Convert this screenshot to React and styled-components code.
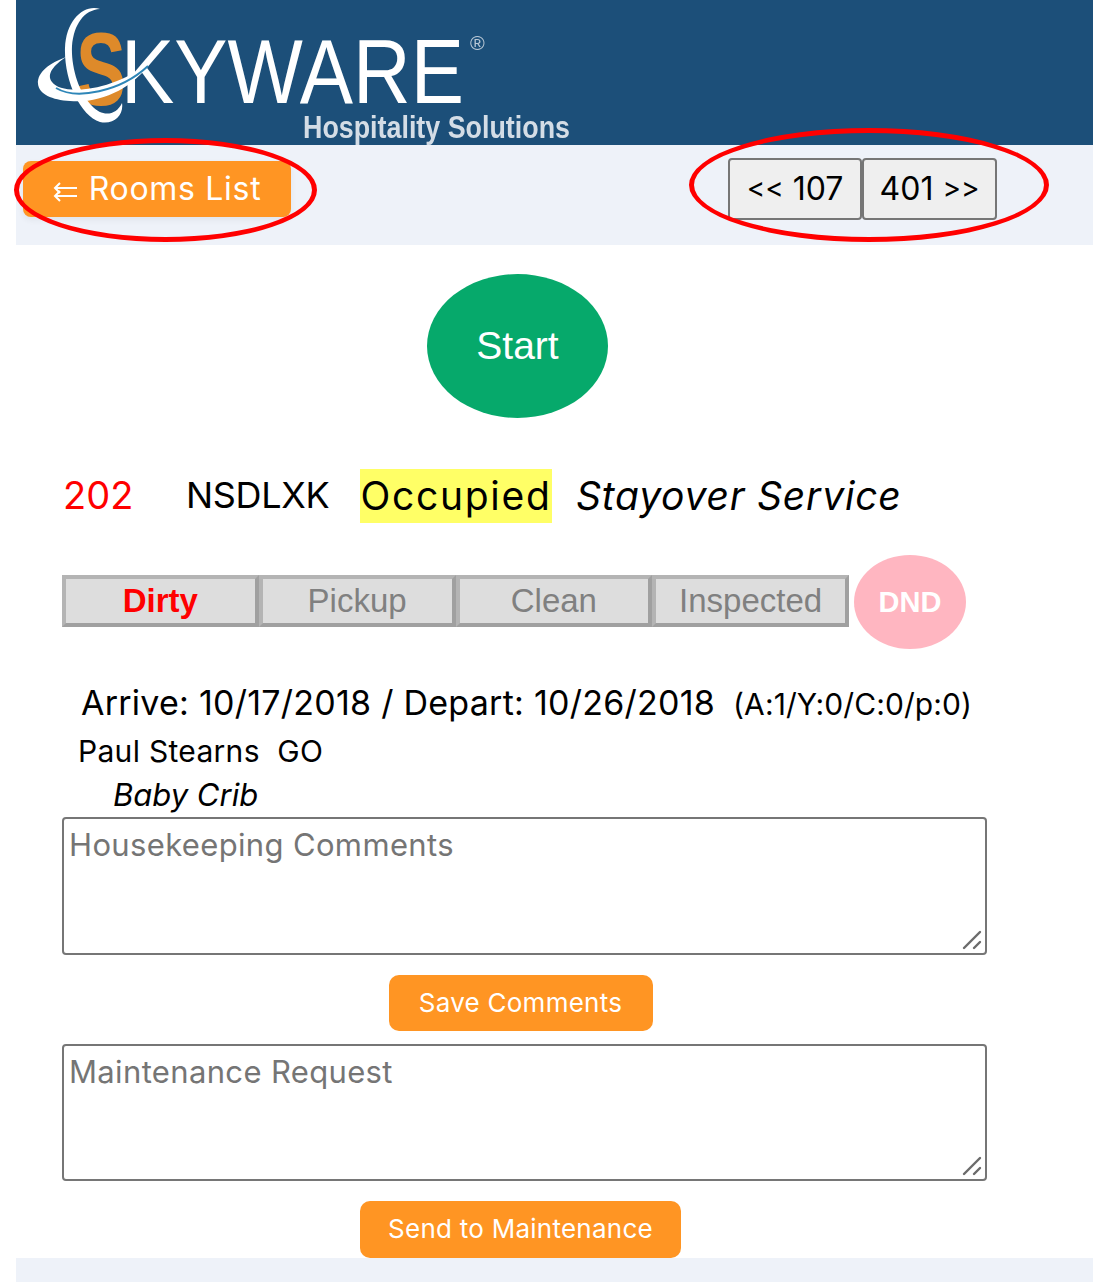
import React from "react";
import styled, { createGlobalStyle } from "styled-components";

const GlobalStyle = createGlobalStyle`
  html, body {
    margin: 0;
    padding: 0;
    background: #fff;
  }
  body {
    font-family: Inter, "Open Sans", sans-serif;
    color: #000;
  }
`;

const Page = styled.div`
  position: relative;
  width: 1093px;
  height: 1282px;
  overflow: hidden;
  padding-left: 16px;
  box-sizing: border-box;
`;

const Banner = styled.header`
  height: 145px;
  background: #1c4f79;
`;

const SubBar = styled.div`
  height: 100px;
  background: #eef2f9;
  display: flex;
  align-items: flex-start;
  padding-left: 7px;
`;

const BackButton = styled.button`
  width: 268px;
  height: 56px;
  margin-top: 16px;
  border: 0;
  border-radius: 8px;
  background: #ff9523;
  color: #fff;
  font-family: inherit;
  font-size: 32px;
  letter-spacing: 0.7px;
  padding: 0 0 2px;
  cursor: pointer;
  box-shadow: 0 3px 6px rgba(0, 0, 0, 0.06);
`;

const NavGroup = styled.div`
  display: flex;
  margin: 13px 0 0 437px;
`;

const NavButton = styled.button`
  width: ${(p) => p.$w}px;
  height: 62px;
  box-sizing: border-box;
  border: 2px solid #767676;
  border-radius: 4px;
  background: #efefef;
  color: #000;
  font-family: inherit;
  font-size: 32px;
  padding: 0 0 2px;
`;

const Chevrons = styled.span`
  font-size: 28px;
  vertical-align: 2px;
`;

const Main = styled.main`
  padding-left: 46px;
`;

const StartRow = styled.div`
  display: flex;
  padding: 29px 0 0 365px;
`;

const StartButton = styled.button`
  width: 181px;
  height: 144px;
  border: 0;
  border-radius: 50%;
  background: #06a96b;
  color: #fff;
  font-family: "Liberation Sans", Arial, sans-serif;
  font-size: 39px;
  padding: 0;
`;

const RoomLine = styled.div`
  display: flex;
  align-items: center;
  height: 54px;
  margin: 51px 0 0 1px;
  white-space: nowrap;
`;

const RoomNo = styled.span`
  color: #ff0000;
  width: 123px;
  font-size: 38px;
  padding-bottom: 2px;
`;

const RoomType = styled.span`
  width: 174px;
  font-size: 36px;
  letter-spacing: -0.3px;
  padding-bottom: 2px;
`;

const Occupied = styled.span`
  background: #ffff66;
  width: 192px;
  height: 54px;
  line-height: 53px;
  text-align: center;
  margin-right: 24px;
  font-size: 39px;
  letter-spacing: 1.7px;
`;

const Service = styled.em`
  font-style: italic;
  font-size: 39px;
  letter-spacing: 0.8px;
  padding-bottom: 2px;
`;

const StatusRow = styled.div`
  display: flex;
  align-items: center;
  margin-top: 32px;
  height: 94px;
`;

const StatusTab = styled.div`
  width: 196.75px;
  height: 52px;
  margin-bottom: 2px;
  box-sizing: border-box;
  border: 4px solid;
  border-color: #b4b4b4 #a0a0a0 #a0a0a0 #b4b4b4;
  background: #dddddd;
  display: flex;
  align-items: center;
  justify-content: center;
  font-family: "Liberation Sans", Arial, sans-serif;
  font-size: 33px;
  font-weight: ${(p) => (p.$active ? 700 : 400)};
  color: ${(p) => (p.$active ? "#ff0000" : "#808080")};
`;

const DndBadge = styled.div`
  width: 112px;
  height: 94px;
  margin-left: 5px;
  border-radius: 50%;
  background: #ffb6c1;
  color: #fff;
  display: flex;
  align-items: center;
  justify-content: center;
  font-family: "Liberation Sans", Arial, sans-serif;
  font-weight: 700;
  font-size: 29px;
`;

const StayLine = styled.div`
  display: flex;
  align-items: baseline;
  margin: 30px 0 0 19px;
  height: 48px;
  line-height: 48px;
  font-size: 34px;
  letter-spacing: 0.25px;
  white-space: nowrap;
`;

const Guests = styled.span`
  font-size: 30px;
  letter-spacing: 0.1px;
  margin-left: 18px;
`;

const GuestLine = styled.div`
  margin: 2px 0 0 16px;
  height: 44px;
  line-height: 44px;
  font-size: 30px;
  letter-spacing: 0.3px;
  white-space: pre;
`;

const NoteLine = styled.div`
  margin: 0 0 0 51px;
  height: 44px;
  line-height: 44px;
  font-size: 31px;
  font-style: italic;
`;

const AreaWrap = styled.div`
  position: relative;
  width: 925px;
  height: ${(p) => p.$h}px;
  margin-top: ${(p) => p.$top}px;
`;

const Area = styled.textarea`
  display: block;
  width: 100%;
  height: 100%;
  box-sizing: border-box;
  border: 2px solid #767676;
  border-radius: 4px;
  padding: 4px 5px;
  resize: none;
  outline: none;
  font-family: inherit;
  font-size: 31px;
  letter-spacing: 0.35px;
  line-height: 44px;
  &::placeholder {
    color: #757575;
    opacity: 1;
  }
`;

const Grip = styled.svg`
  position: absolute;
  right: 5px;
  bottom: 5px;
  width: 20px;
  height: 20px;
`;

const ActionRow = styled.div`
  display: flex;
  justify-content: center;
  width: 917px;
  margin-top: 20px;
`;

const ActionButton = styled.button`
  width: ${(p) => p.$w}px;
  height: ${(p) => p.$h}px;
  border: 0;
  border-radius: 10px;
  background: #ff9523;
  color: #fff;
  font-family: inherit;
  font-size: 26px;
  letter-spacing: 0.25px;
  padding: 0 0 2px;
`;

const Footer = styled.footer`
  position: absolute;
  left: 16px;
  right: 0;
  bottom: 0;
  height: 24px;
  background: #eef2f9;
`;

const Circle = styled.div`
  position: absolute;
  left: ${(p) => p.$x}px;
  top: ${(p) => p.$y}px;
  width: ${(p) => p.$w}px;
  height: ${(p) => p.$h}px;
  box-sizing: border-box;
  border: 5.5px solid #ff0000;
  border-radius: 50%;
  pointer-events: none;
`;

// logo coordinates are page pixels, the group shifts them back by the banner's inset
const Logo = () => (
  <svg width="600" height="145" viewBox="0 0 600 145" style={{ display: "block" }}>
    <defs>
      <filter id="soft" x="-5%" y="-5%" width="110%" height="110%">
        <feGaussianBlur stdDeviation="0.55" />
      </filter>
    </defs>
    <g filter="url(#soft)" transform="translate(-16 0)">
      <text
        x="76"
        y="105"
        fontFamily="'Liberation Sans', Arial, sans-serif"
        fontSize="104"
        fontWeight="700"
        fill="#de8a2a"
        textLength="50"
        lengthAdjust="spacingAndGlyphs"
      >
        S
      </text>
      <text
        x="121"
        y="103"
        fontFamily="'Liberation Sans', Arial, sans-serif"
        fontSize="91"
        fill="#fff"
        textLength="343"
        lengthAdjust="spacingAndGlyphs"
      >
        KYWARE
      </text>
      <path
        d="M100 9 C84 4 66 20 65 48 C64 80 80 116 100 122 C114 125 124 115 122 103 C116 116 102 117 92 106 C78 92 71 66 72 46 C74 24 84 10 100 9 Z"
        fill="#fff"
      />
      <path
        d="M38 84 C37 72 50 63 66 57 C54 65 46 74 52 82 C62 96 112 92 150 62 C134 88 100 104 70 101 C52 100 39 94 38 84 Z"
        fill="#fff"
      />
      <path d="M56 88 C76 100 120 92 148 66" fill="none" stroke="#2d86b8" strokeWidth="2" />
      <text x="470" y="50" fontFamily="'Liberation Sans', Arial, sans-serif" fontSize="20" fill="#b9c8d6">
        ®
      </text>
      <text
        x="303"
        y="138"
        fontFamily="'Liberation Sans', Arial, sans-serif"
        fontSize="32"
        fontWeight="700"
        fill="#d4dde6"
        textLength="267"
        lengthAdjust="spacingAndGlyphs"
      >
        Hospitality Solutions
      </text>
    </g>
  </svg>
);

const BackArrows = () => (
  <svg
    width="26"
    height="22"
    viewBox="0 0 26 22"
    fill="none"
    stroke="#fff"
    strokeWidth="2"
    style={{ verticalAlign: "-3px", marginRight: 10 }}
  >
    <path d="M2 7H24M7 2L2 7L7 12" />
    <path d="M2 15H24M7 10L2 15L7 20" />
  </svg>
);

const ResizeGrip = () => (
  <Grip viewBox="0 0 20 20" stroke="#6b6b6b" strokeWidth="2.4" strokeLinecap="round">
    <path d="M2 18L18 2" />
    <path d="M12 18L18 12" />
  </Grip>
);

const tabs = ["Dirty", "Pickup", "Clean", "Inspected"];

export default function App() {
  return (
    <Page>
      <GlobalStyle />
      <Banner>
        <Logo />
      </Banner>
      <SubBar>
        <BackButton>
          <BackArrows />
          Rooms List
        </BackButton>
        <NavGroup>
          <NavButton $w={134}>
            <Chevrons>{"<<"}</Chevrons> 107
          </NavButton>
          <NavButton $w={135}>
            401 <Chevrons>{">>"}</Chevrons>
          </NavButton>
        </NavGroup>
      </SubBar>
      <Main>
        <StartRow>
          <StartButton>Start</StartButton>
        </StartRow>
        <RoomLine>
          <RoomNo>202</RoomNo>
          <RoomType>NSDLXK</RoomType>
          <Occupied>Occupied</Occupied>
          <Service>Stayover Service</Service>
        </RoomLine>
        <StatusRow>
          {tabs.map((t, i) => (
            <StatusTab key={t} $active={i === 0}>
              {t}
            </StatusTab>
          ))}
          <DndBadge>DND</DndBadge>
        </StatusRow>
        <StayLine>
          Arrive: 10/17/2018 / Depart: 10/26/2018
          <Guests>(A:1/Y:0/C:0/p:0)</Guests>
        </StayLine>
        <GuestLine>Paul Stearns  GO</GuestLine>
        <NoteLine>Baby Crib</NoteLine>
        <AreaWrap $h={138} $top={0}>
          <Area placeholder="Housekeeping Comments" />
          <ResizeGrip />
        </AreaWrap>
        <ActionRow>
          <ActionButton $w={264} $h={56}>Save Comments</ActionButton>
        </ActionRow>
        <AreaWrap $h={137} $top={13}>
          <Area placeholder="Maintenance Request" />
          <ResizeGrip />
        </AreaWrap>
        <ActionRow>
          <ActionButton $w={321} $h={57}>Send to Maintenance</ActionButton>
        </ActionRow>
      </Main>
      <Footer />
      <Circle $x={14} $y={138} $w={303} $h={104} />
      <Circle $x={689} $y={128} $w={360} $h={114} />
    </Page>
  );
}
